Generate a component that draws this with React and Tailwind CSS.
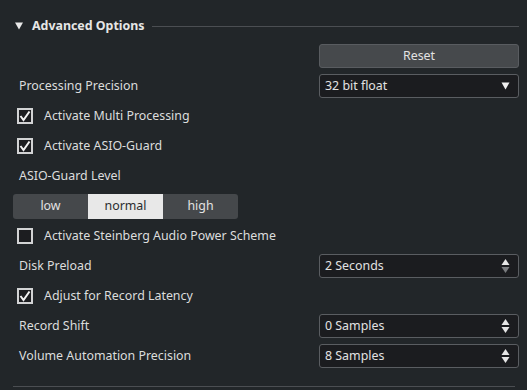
import React from 'react';

const font = { fontFamily: '"Noto Sans", "Open Sans", Arial, sans-serif' };

function Check({ checked, label }) {
  return (
    <div className="flex items-center h-[30px] pl-[17px]">
      <div className="w-[16px] h-[16px] border-2 border-[#d2d3d4] bg-[#1c1d20] flex items-center justify-center">
        {checked && (
          <svg width="12" height="12" viewBox="0 0 12 12">
            <polyline points="1.5,6 4.5,10 10.5,1.5" fill="none" stroke="#f2f2f2" strokeWidth="2" />
          </svg>
        )}
      </div>
      <span className="ml-[11px] text-[12.4px] text-[#dcdddd]">{label}</span>
    </div>
  );
}

function Spin({ dim }) {
  return (
    <svg width="9" height="16" viewBox="0 0 9 16">
      <polygon points="4.5,1 8.5,7 0.5,7" fill="#e6e6e6" />
      <polygon points="0.5,9 8.5,9 4.5,15" fill={dim ? '#7a7c7f' : '#e6e6e6'} />
    </svg>
  );
}

function Field({ value, arrow = 'spin', dim }) {
  return (
    <div className="w-[200px] h-[24px] mr-[8px] bg-[#1b1c1f] border border-[#5a5d61] rounded-[3px] flex items-center justify-between pl-[5px] pr-[8px]">
      <span className="text-[12.4px] text-[#e2e2e2]">{value}</span>
      {arrow === 'drop' ? (
        <svg width="9" height="8" viewBox="0 0 9 8">
          <polygon points="0.5,0.5 8.5,0.5 4.5,7.5" fill="#f0f0f0" />
        </svg>
      ) : (
        <Spin dim={dim} />
      )}
    </div>
  );
}

function Row({ label, children }) {
  return (
    <div className="flex items-center justify-between h-[30px]">
      <span className="pl-[19px] text-[12.4px] text-[#dcdddd]">{label}</span>
      {children}
    </div>
  );
}

export default function App() {
  const levels = ['low', 'normal', 'high'];
  return (
    <div className="w-[527px] h-[390px] bg-[#222629] pt-[11px] overflow-hidden" style={font}>
      <div className="flex items-center h-[30px] pl-[15px] pr-[8px]">
        <svg width="8" height="8" viewBox="0 0 8 8">
          <polygon points="0,0.5 8,0.5 4,7.5" fill="#e8e8e8" />
        </svg>
        <span className="ml-[9px] text-[12.4px] font-bold text-[#e6e6e6]">Advanced Options</span>
        <div className="flex-1 ml-[7px] h-px bg-[#4b4e52]" />
      </div>

      <div className="flex justify-end items-center h-[30px]">
        <button className="w-[200px] h-[24px] mr-[8px] bg-[#46494c] border border-[#595c60] rounded-[3px] text-[12.4px] text-[#e2e2e2]">
          Reset
        </button>
      </div>

      <Row label="Processing Precision">
        <Field value="32 bit float" arrow="drop" />
      </Row>
      <Check checked label="Activate Multi Processing" />
      <Check checked label="Activate ASIO-Guard" />
      <Row label="ASIO-Guard Level" />

      <div className="flex items-center h-[30px] pl-[13px]">
        <div className="flex rounded-[3px] overflow-hidden">
          {levels.map((l) => (
            <div
              key={l}
              className={
                l === 'normal'
                  ? 'w-[75px] h-[25px] flex items-center justify-center text-[12.4px] bg-[#e8e8e8] text-[#2a2c2f]'
                  : 'w-[75px] h-[25px] flex items-center justify-center text-[12.4px] bg-[#45484b] text-[#e2e2e2]'
              }
            >
              {l}
            </div>
          ))}
        </div>
      </div>

      <Check label="Activate Steinberg Audio Power Scheme" />
      <Row label="Disk Preload">
        <Field value="2 Seconds" dim />
      </Row>
      <Check checked label="Adjust for Record Latency" />
      <Row label="Record Shift">
        <Field value="0 Samples" />
      </Row>
      <Row label="Volume Automation Precision">
        <Field value="8 Samples" />
      </Row>

      <div className="mt-[15px] ml-[13px] mr-[12px] h-px bg-[#4b4e52]" />
    </div>
  );
}
